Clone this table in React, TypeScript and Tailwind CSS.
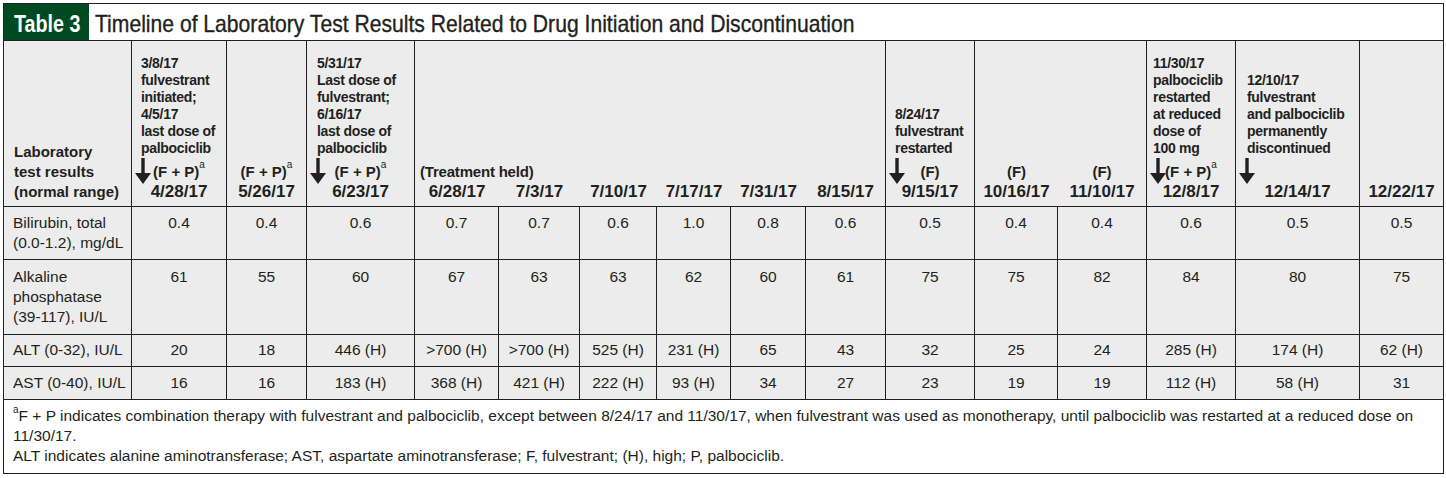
import React from "react";

const LINE = "border-[#231f20]";

function Arrow() {
  return (
    <svg width="16" height="26" viewBox="0 0 16 26" className="absolute left-[3px] bottom-[22px]">
      <rect x="6.3" y="0" width="3.4" height="17" fill="#231f20" />
      <polygon points="0,15 16,15 8,26" fill="#231f20" />
    </svg>
  );
}

const FP = (
  <span>
    (F + P)<sup className="text-[10px] font-normal align-[4px]">a</sup>
  </span>
);

type HeadCol = {
  anno?: string[];
  annoPl?: string;
  mid?: React.ReactNode;
  midLeft?: boolean;
  date: string;
  arrow?: boolean;
  br: boolean;
};

const headCols: HeadCol[] = [
  {
    anno: ["3/8/17", "fulvestrant", "initiated;", "4/5/17", "last dose of", "palbociclib"],
    annoPl: "pl-[9px]",
    mid: FP,
    date: "4/28/17",
    arrow: true,
    br: true,
  },
  { mid: FP, date: "5/26/17", br: true },
  {
    anno: ["5/31/17", "Last dose of", "fulvestrant;", "6/16/17", "last dose of", "palbociclib"],
    annoPl: "pl-[10px]",
    mid: FP,
    date: "6/23/17",
    arrow: true,
    br: true,
  },
  { mid: "(Treatment held)", midLeft: true, date: "6/28/17", br: false },
  { date: "7/3/17", br: false },
  { date: "7/10/17", br: false },
  { date: "7/17/17", br: false },
  { date: "7/31/17", br: false },
  { date: "8/15/17", br: true },
  {
    anno: ["8/24/17", "fulvestrant", "restarted"],
    annoPl: "pl-[9px]",
    mid: "(F)",
    date: "9/15/17",
    arrow: true,
    br: true,
  },
  { mid: "(F)", date: "10/16/17", br: false },
  { mid: "(F)", date: "11/10/17", br: true },
  {
    anno: ["11/30/17", "palbociclib", "restarted", "at reduced", "dose of", "100 mg"],
    annoPl: "pl-[6px]",
    mid: FP,
    date: "12/8/17",
    arrow: true,
    br: true,
  },
  {
    anno: ["12/10/17", "fulvestrant", "and palbociclib", "permanently", "discontinued"],
    annoPl: "pl-[11px]",
    date: "12/14/17",
    arrow: true,
    br: true,
  },
  { date: "12/22/17", br: false },
];

type Row = { label: React.ReactNode; values: string[]; pt: string };

const rows: Row[] = [
  {
    label: (
      <>
        Bilirubin, total
        <br />
        (0.0-1.2), mg/dL
      </>
    ),
    values: ["0.4", "0.4", "0.6", "0.7", "0.7", "0.6", "1.0", "0.8", "0.6", "0.5", "0.4", "0.4", "0.6", "0.5", "0.5"],
    pt: "pt-[6px]",
  },
  {
    label: (
      <>
        Alkaline
        <br />
        phosphatase
        <br />
        (39-117), IU/L
      </>
    ),
    values: ["61", "55", "60", "67", "63", "63", "62", "60", "61", "75", "75", "82", "84", "80", "75"],
    pt: "pt-[7px]",
  },
  {
    label: "ALT (0-32), IU/L",
    values: ["20", "18", "446 (H)", ">700 (H)", ">700 (H)", "525 (H)", "231 (H)", "65", "43", "32", "25", "24", "285 (H)", "174 (H)", "62 (H)"],
    pt: "pt-[5px]",
  },
  {
    label: "AST (0-40), IU/L",
    values: ["16", "16", "183 (H)", "368 (H)", "421 (H)", "222 (H)", "93 (H)", "34", "27", "23", "19", "19", "112 (H)", "58 (H)", "31"],
    pt: "pt-[6px]",
  },
];

export default function App() {
  return (
    <div className="bg-white w-[1446px] h-[478px] pl-[3px] pt-[3px] text-[#231f20] font-['Liberation_Sans',Arial,sans-serif]">
      <div className={`w-[1441px] border ${LINE}`}>
        {/* Title */}
        <div className={`flex h-[37px] border-b ${LINE} bg-white`}>
          <div className="w-[85px] shrink-0 bg-[#004a22] flex items-center pl-[10px] pt-[3px] overflow-hidden">
            <span className="inline-block text-white font-bold text-[24px] leading-none whitespace-nowrap scale-x-[0.82] origin-left">
              Table 3
            </span>
          </div>
          <div className="flex items-center pl-[6px] pt-[3px]">
            <span className="inline-block text-[24px] leading-none whitespace-nowrap scale-x-[0.88] origin-left [-webkit-text-stroke:0.35px_#231f20]">
              Timeline of Laboratory Test Results Related to Drug Initiation and Discontinuation
            </span>
          </div>
        </div>

        {/* Table grid */}
        <div className="grid grid-cols-[128px_95px_80px_108px_84px_81px_77px_74px_75px_80px_89px_83px_89px_89px_124px_83px] grid-rows-[166px_53px_75px_32px_33px] bg-[#ececec]">
          {/* header: lab col */}
          <div className={`border-r border-b ${LINE} flex flex-col justify-end pl-[10px] pb-[4px] font-bold text-[15px] leading-[20px]`}>
            <div>Laboratory</div>
            <div>test results</div>
            <div>(normal range)</div>
          </div>
          {headCols.map((c, i) => (
            <div
              key={i}
              className={`relative border-b ${c.br ? "border-r" : ""} ${LINE} flex flex-col justify-end pb-[4px] font-bold`}
            >
              {c.anno && (
                <div className={`${c.annoPl} text-[14px] leading-[17px] tracking-[-0.3px] mb-[5px] whitespace-nowrap`}>
                  {c.anno.map((a, j) => (
                    <div key={j}>{a}</div>
                  ))}
                </div>
              )}
              <div
                className={`h-[20px] text-[15px] leading-[20px] whitespace-nowrap ${
                  c.midLeft ? "text-left pl-[5px] tracking-[-0.2px]" : "text-center"
                }`}
              >
                {c.mid}
              </div>
              <div className="text-[17px] leading-[20px] text-center whitespace-nowrap">{c.date}</div>
              {c.arrow && <Arrow />}
            </div>
          ))}

          {/* body rows */}
          {rows.map((r, ri) => (
            <React.Fragment key={ri}>
              <div className={`border-r border-b ${LINE} pl-[9px] ${r.pt} text-[15.5px] leading-[20px] whitespace-nowrap`}>
                {r.label}
              </div>
              {r.values.map((v, vi) => (
                <div
                  key={vi}
                  className={`border-b ${vi < r.values.length - 1 ? "border-r" : ""} ${LINE} ${r.pt} text-center text-[15.5px] leading-[20px] whitespace-nowrap`}
                >
                  {v}
                </div>
              ))}
            </React.Fragment>
          ))}
        </div>

        {/* Footnote */}
        <div className="h-[73px] bg-white pl-[9px] pt-[6px] text-[15.5px] leading-[20px]">
          <div className="whitespace-nowrap">
            <sup className="text-[10px] align-[3px]">a</sup>F + P indicates combination therapy with fulvestrant and palbociclib, except between 8/24/17 and 11/30/17, when fulvestrant was used as monotherapy, until palbociclib was restarted at a reduced dose on
          </div>
          <div>11/30/17.</div>
          <div className="whitespace-nowrap">
            ALT indicates alanine aminotransferase; AST, aspartate aminotransferase; F, fulvestrant; (H), high; P, palbociclib.
          </div>
        </div>
      </div>
    </div>
  );
}
